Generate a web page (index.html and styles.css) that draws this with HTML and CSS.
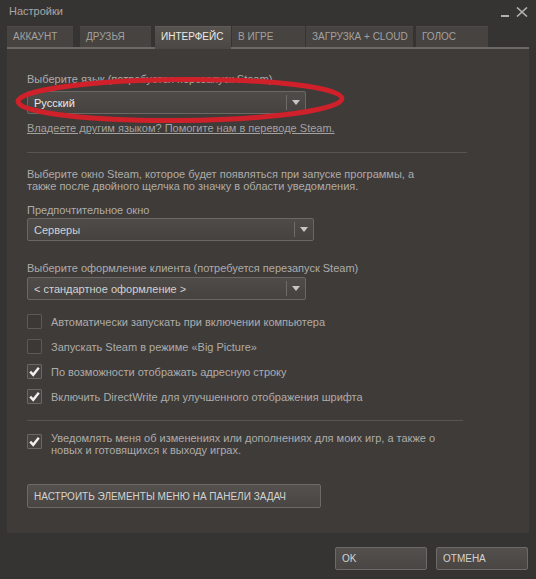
FILE: index.html
```html
<!DOCTYPE html>
<html lang="ru">
<head>
<meta charset="utf-8">
<title>Настройки</title>
<link rel="stylesheet" href="styles.css">
</head>
<body>
<div class="window">
  <div class="titlebar">
    <span class="title">Настройки</span>
    <div class="controls">
      <span class="min"></span>
      <svg class="close" width="12" height="10" viewBox="0 0 12 10"><path d="M1 0.5 L11 9.5 M11 0.5 L1 9.5" stroke="#b4b2af" stroke-width="1.6" fill="none"/></svg>
    </div>
  </div>
  <div class="tabs">
    <div class="tab t1">АККАУНТ</div>
    <div class="tab t2">ДРУЗЬЯ</div>
    <div class="tab t3 active">ИНТЕРФЕЙС</div>
    <div class="tab t4">В ИГРЕ</div>
    <div class="tab t5">ЗАГРУЗКА + CLOUD</div>
    <div class="tab t6">ГОЛОС</div>
  </div>
  <div class="panel">
    <div class="lang-block">
      <div class="label">Выберите язык (потребуется перезапуск Steam)</div>
      <div class="select w1 bright"><span class="val">Русский</span><span class="arrow"></span></div>
      <svg class="circle" width="340" height="50" viewBox="0 0 340 50"><ellipse cx="169" cy="24" rx="162" ry="20.5" fill="none" stroke="#d0202a" stroke-width="5" transform="rotate(-0.5 169 24)"/></svg>
    </div>
    <a class="link">Владеете другим языком? Помогите нам в переводе Steam.</a>
    <div class="hr hr1"></div>
    <p class="para">Выберите окно Steam, которое будет появляться при запуске программы, а<br>также после двойного щелчка по значку в области уведомления.</p>
    <div class="label l2">Предпочтительное окно</div>
    <div class="select w2"><span class="val">Серверы</span><span class="arrow"></span></div>
    <div class="label l3">Выберите оформление клиента (потребуется перезапуск Steam)</div>
    <div class="select w1 s3"><span class="val">&lt; стандартное оформление &gt;</span><span class="arrow"></span></div>
    <div class="checks">
      <div class="check"><span class="box"></span><span>Автоматически запускать при включении компьютера</span></div>
      <div class="check"><span class="box"></span><span>Запускать Steam в режиме «Big Picture»</span></div>
      <div class="check"><span class="box on"><svg width="13" height="13" viewBox="0 0 13 13"><path d="M2.2 6.6 L5.2 9.8 L10.8 2.8" stroke="#f2f0ee" stroke-width="2.4" fill="none"/></svg></span><span>По возможности отображать адресную строку</span></div>
      <div class="check"><span class="box on"><svg width="13" height="13" viewBox="0 0 13 13"><path d="M2.2 6.6 L5.2 9.8 L10.8 2.8" stroke="#f2f0ee" stroke-width="2.4" fill="none"/></svg></span><span>Включить DirectWrite для улучшенного отображения шрифта</span></div>
    </div>
    <div class="hr hr2"></div>
    <div class="check multi"><span class="box on"><svg width="13" height="13" viewBox="0 0 13 13"><path d="M2.2 6.6 L5.2 9.8 L10.8 2.8" stroke="#f2f0ee" stroke-width="2.4" fill="none"/></svg></span><span>Уведомлять меня об изменениях или дополнениях для моих игр, а также о<br>новых и готовящихся к выходу играх.</span></div>
    <div class="btn wide">НАСТРОИТЬ ЭЛЕМЕНТЫ МЕНЮ НА ПАНЕЛИ ЗАДАЧ</div>
  </div>
  <div class="footer">
    <div class="btn small">OK</div>
    <div class="btn small">ОТМЕНА</div>
  </div>
</div>
</body>
</html>
```
FILE: styles.css
```css
* { box-sizing: border-box; }
html, body { margin: 0; padding: 0; }
body {
  width: 536px;
  height: 579px;
  background: #353332;
  font-family: "Liberation Sans", Arial, sans-serif;
  font-size: 11px;
  color: #aeaca9;
  overflow: hidden;
}
.window {
  width: 536px;
  height: 579px;
  display: flex;
  flex-direction: column;
  background: #363433;
}
.titlebar {
  height: 26px;
  display: flex;
  justify-content: space-between;
  align-items: flex-start;
  padding: 4px 8px 0 9px;
}
.title { font-size: 11px; color: #a9a7a4; line-height: 14px; }
.controls { display: flex; align-items: flex-start; gap: 7px; padding-top: 3px; }
.min { width: 8px; height: 2px; background: #b4b2af; margin-top: 8px; }
.close { display: block; }
.tabs {
  display: flex;
  height: 21px;
  padding-left: 7px;
  align-items: stretch;
}
.tab {
  background: #464341;
  color: #a4a19e;
  font-size: 10px;
  line-height: 20px;
  padding-left: 6px;
  border-top: 1px solid #4d4a48;
  white-space: nowrap;
}
.t1 { width: 66px; }
.t2 { width: 71px; margin-left: 7px; }
.t3 { width: 76px; margin-left: 4px; }
.t4 { width: 73px; margin-left: 1px; }
.t5 { width: 107px; margin-left: 1px; }
.t6 { width: 72px; margin-left: 3px; }
.tab.active {
  background: linear-gradient(#57544f, #4a4744);
  color: #eceae8;
  border-top: 1px solid #605d59;
  height: 23px;
  position: relative;
  z-index: 1;
}
.panel {
  margin: 0 7px;
  height: 486px;
  background: #3e3b39;
  border-top: 2px solid #6b6865;
  padding: 23px 20px 0 20px;
  display: flex;
  flex-direction: column;
  align-items: flex-start;
}
.label { line-height: 14px; color: #aeaca9; }
.lang-block { position: relative; }
.lang-block .select { margin-top: 5px; }
.circle { position: absolute; left: -16px; top: 4px; pointer-events: none; }
.select {
  height: 23px;
  border: 1px solid #6a6764;
  border-radius: 2px;
  background: linear-gradient(#4e4b48, #454240);
  display: flex;
  align-items: center;
  justify-content: space-between;
  color: #d3d1cf;
  font-size: 11px;
}
.select.bright { color: #ebe9e7; }
.w1 { width: 279px; }
.w2 { width: 287px; margin-top: 1px; }
.s3 { margin-top: 2px; }
.val { padding-left: 6px; }
.arrow {
  width: 19px;
  height: 15px;
  border-left: 1px solid #6e6b68;
  position: relative;
}
.arrow::after {
  content: "";
  position: absolute;
  left: 5px;
  top: 5px;
  border-left: 4px solid transparent;
  border-right: 4px solid transparent;
  border-top: 5px solid #c8c6c4;
}
.link {
  margin-top: 7px;
  line-height: 14px;
  text-decoration: underline;
  color: #a4a2a0;
}
.hr { height: 1px; background: #575452; }
.hr1 { width: 440px; margin-top: 17px; }
.hr2 { width: 436px; margin-top: 16px; }
.para { margin: 15px 0 0 0; line-height: 12px; }
.l2 { margin-top: 11px; }
.l3 { margin-top: 20px; }
.checks { display: flex; flex-direction: column; gap: 10px; margin-top: 14px; }
.check { display: flex; align-items: center; gap: 9px; line-height: 14px; height: 15px; }
.box {
  width: 15px;
  height: 15px;
  border: 1px solid #5c5956;
  background: #3b3836;
  border-radius: 1px;
  display: flex;
  align-items: center;
  justify-content: center;
  flex: none;
}
.box.on { background: #45423f; border-color: #6a6764; }
.check.multi { margin-top: 11px; align-items: flex-start; line-height: 12px; height: auto; }
.check.multi .box { margin-top: 2px; }
.btn {
  border: 1px solid #6c6966;
  border-radius: 2px;
  background: linear-gradient(#53504d, #484542);
  color: #d5d3d1;
  font-size: 10px;
  display: flex;
  align-items: center;
  padding-left: 6px;
  white-space: nowrap;
}
.btn.wide { width: 294px; height: 24px; margin-top: 28px; }
.footer {
  display: flex;
  justify-content: flex-end;
  gap: 9px;
  padding: 14px 8px 0 0;
}
.btn.small { width: 92px; height: 23px; }
```
